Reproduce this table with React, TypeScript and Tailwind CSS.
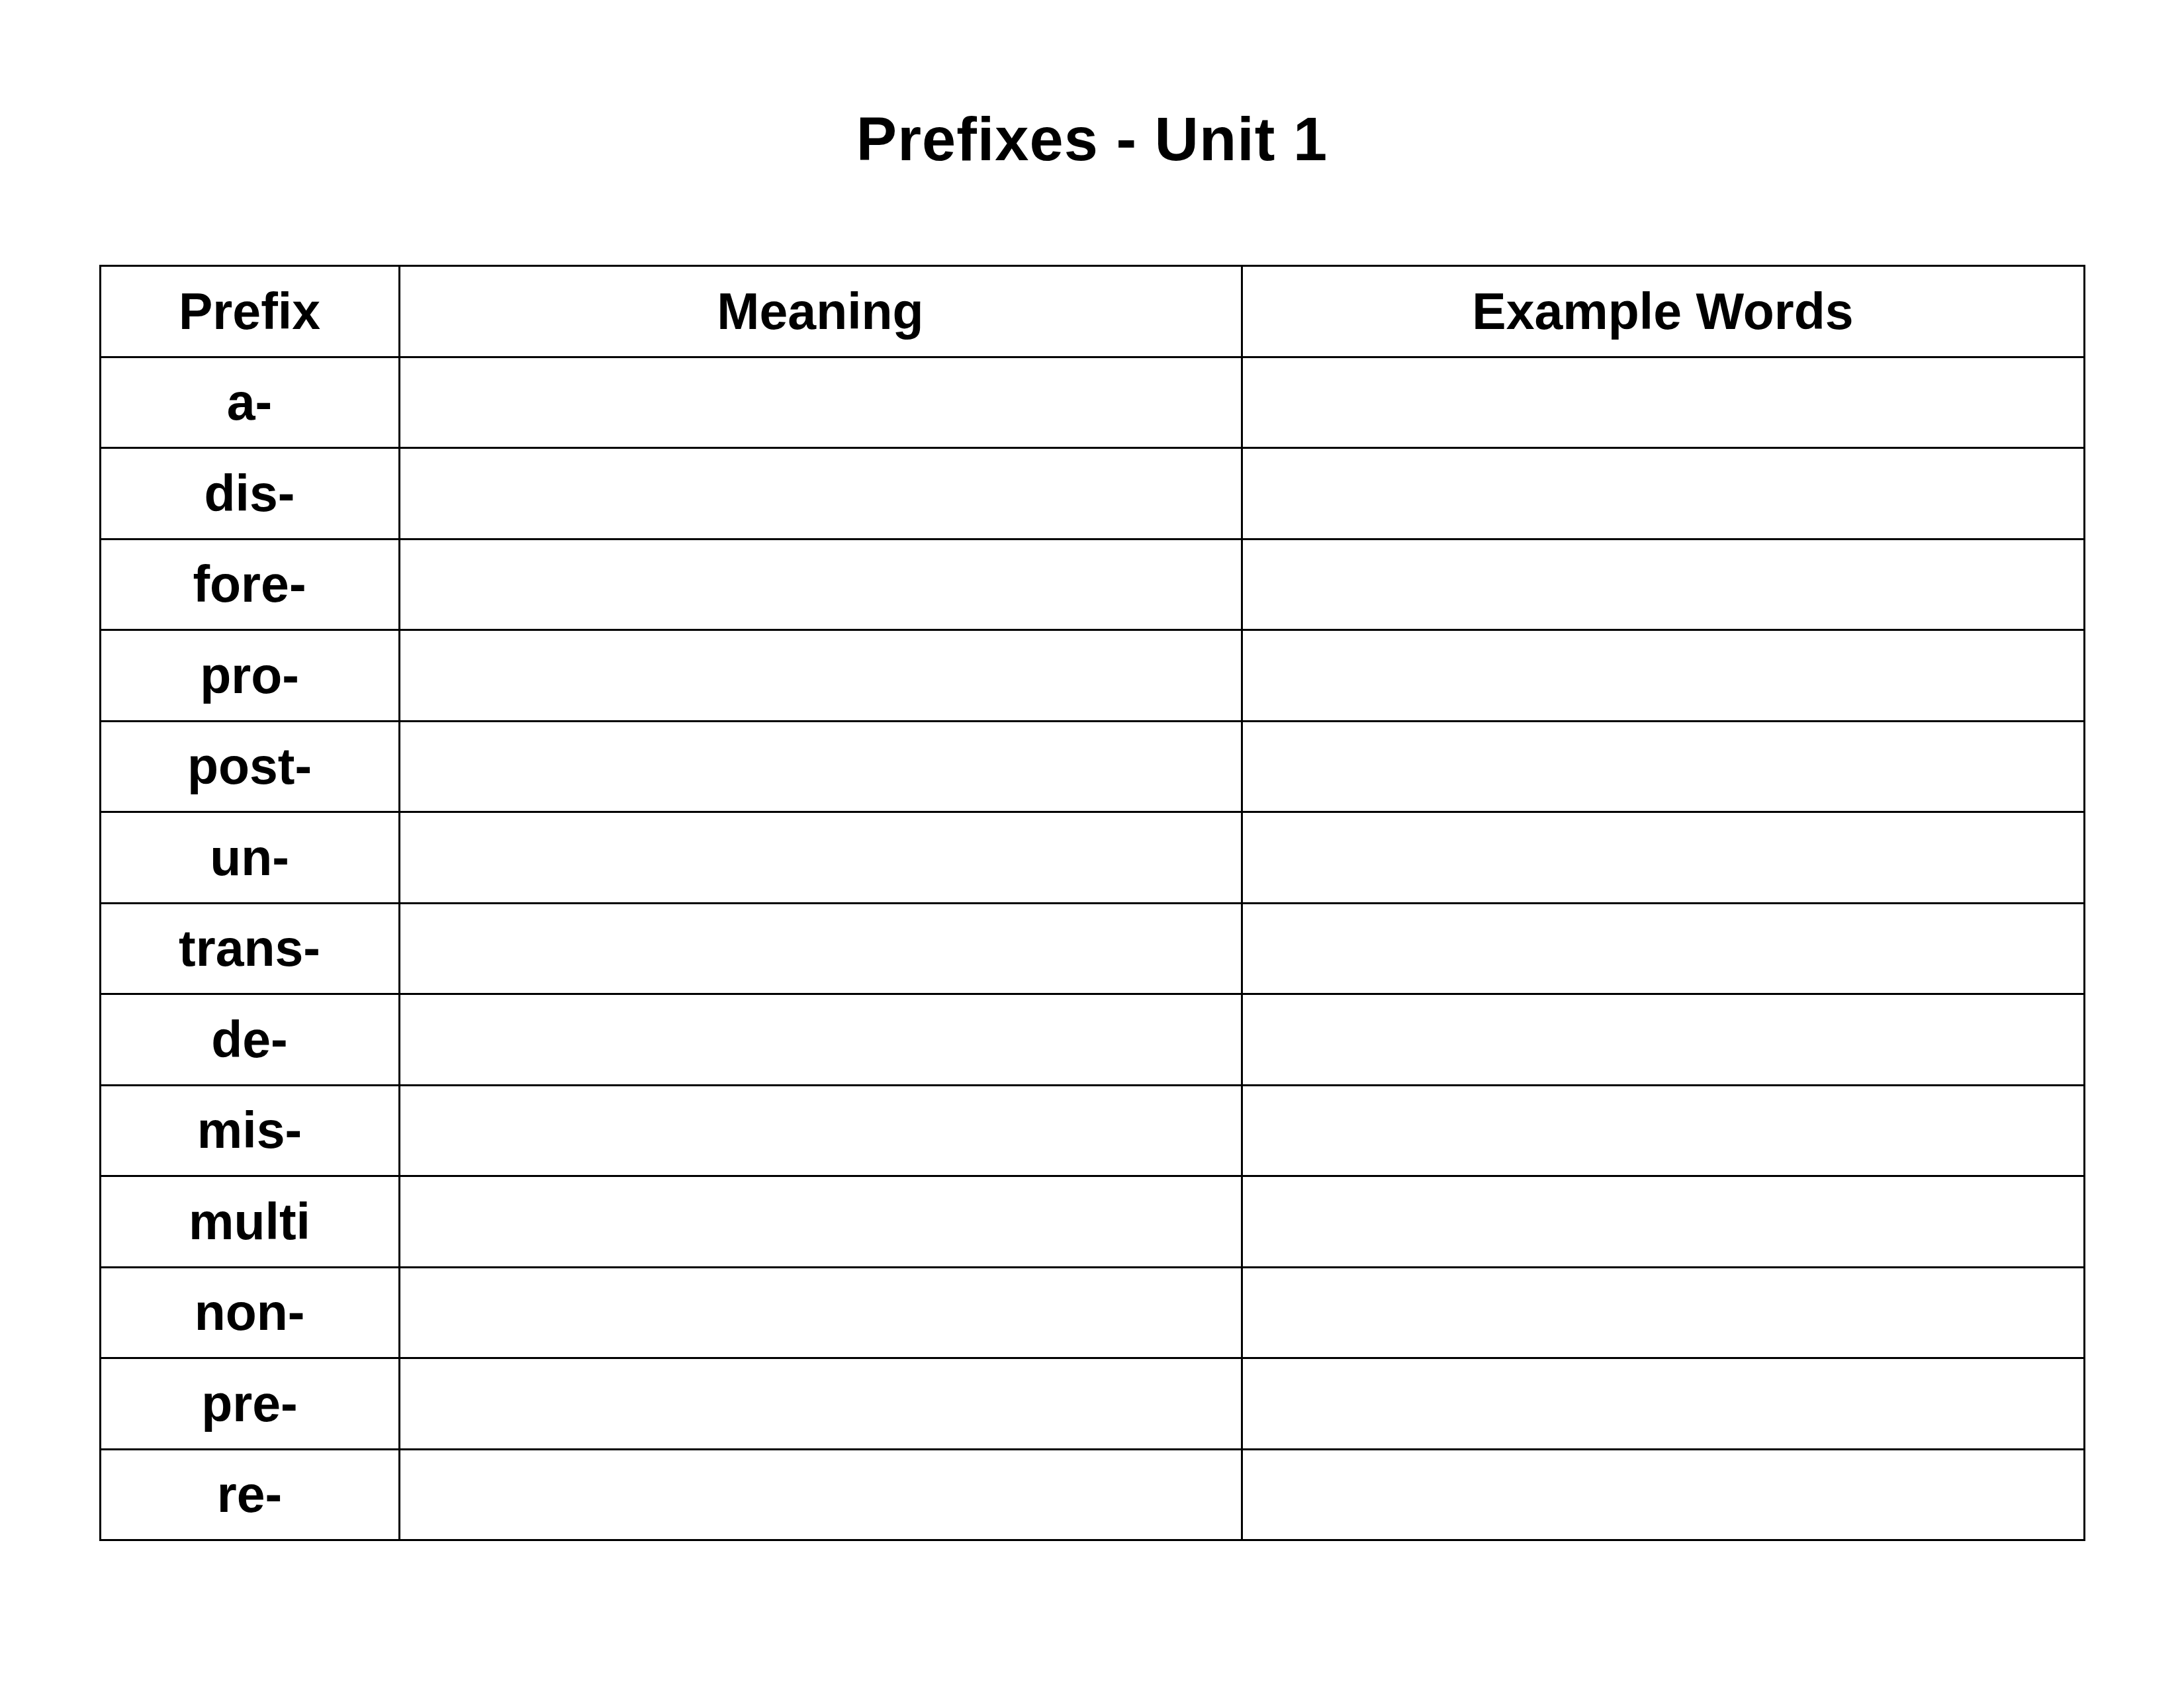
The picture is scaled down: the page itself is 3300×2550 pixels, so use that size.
const prefixes = [
  "a-",
  "dis-",
  "fore-",
  "pro-",
  "post-",
  "un-",
  "trans-",
  "de-",
  "mis-",
  "multi",
  "non-",
  "pre-",
  "re-",
];

function Cell({ children }: { children?: React.ReactNode }) {
  return (
    <div className="bg-white flex items-center justify-center text-[77px] leading-none text-black">
      {children}
    </div>
  );
}

export default function App() {
  return (
    <div className="w-[3300px] h-[2550px] bg-white font-['Liberation_Sans',Arial,sans-serif] font-bold text-black">
      {/* Title */}
      <h1 className="pt-[164px] text-center text-[92px] leading-none font-bold tracking-[1px]">
        Prefixes - Unit 1
      </h1>

      {/* Worksheet table */}
      <div className="mt-[144px] mx-auto w-[3001px] grid grid-cols-[449px_1fr_1fr] auto-rows-[134.5px] gap-[3px] p-[3px] bg-black">
        <Cell>Prefix</Cell>
        <Cell>Meaning</Cell>
        <Cell>Example Words</Cell>
        {prefixes.map((p) => (
          <>
            <Cell key={p}>{p}</Cell>
            <Cell />
            <Cell />
          </>
        ))}
      </div>
    </div>
  );
}
